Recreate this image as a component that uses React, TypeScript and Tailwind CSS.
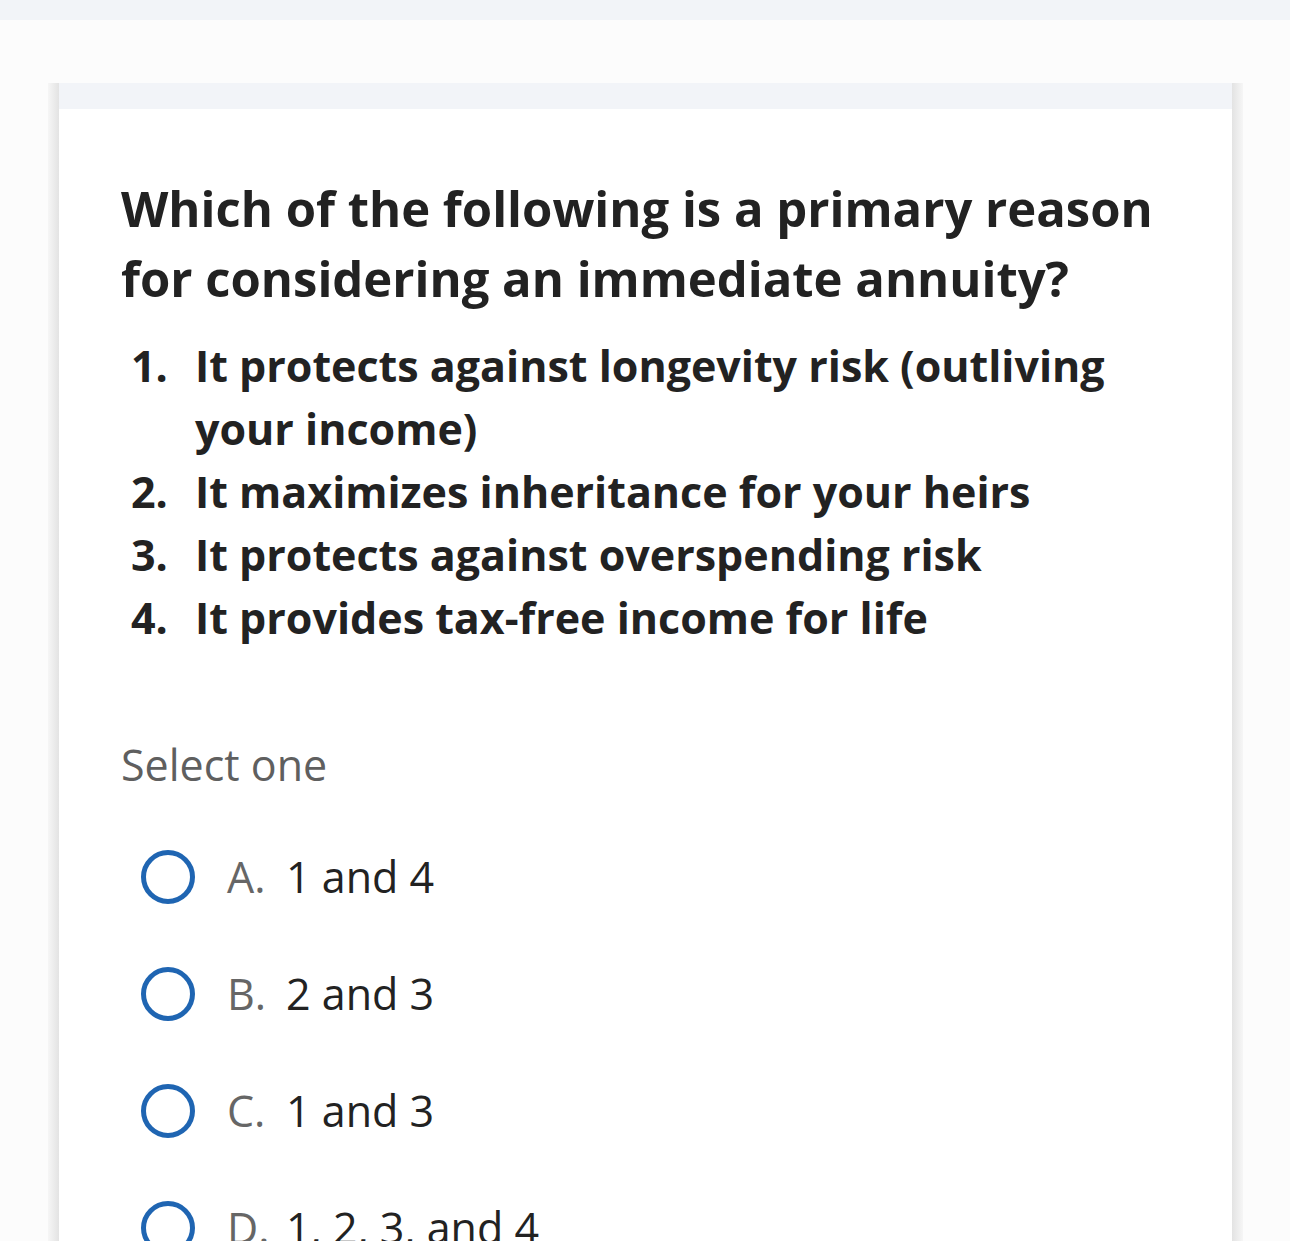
import React from "react";

const items = [
  "It protects against longevity risk (outliving your income)",
  "It maximizes inheritance for your heirs",
  "It protects against overspending risk",
  "It provides tax-free income for life",
];

const options = [
  ["A.", "1 and 4"],
  ["B.", "2 and 3"],
  ["C.", "1 and 3"],
  ["D.", "1, 2, 3, and 4"],
];

export default function App() {
  return (
    <div
      className="min-h-[1241px] bg-[#fcfcfc] overflow-hidden"
      style={{ fontFamily: '"Open Sans", "Noto Sans", sans-serif' }}
    >
      <div className="h-[20px] bg-[#f2f4f8]" />
      <div className="mt-[63px] ml-[48px] w-[1195px] flex">
        <div className="w-[11px] bg-gradient-to-r from-[#f6f6f6] to-[#e3e3e3]" />
        <div className="flex-1 bg-white">
          <div className="h-[26px] bg-[#f2f4f8]" />
          <div className="pl-[62px] pr-[40px] pt-[64px] pb-[40px]">
            <h1 className="text-[49px] leading-[70px] font-bold text-[#222]">
              Which of the following is a primary reason for considering an immediate annuity?
            </h1>
            <ol className="mt-[21px]">
              {items.map((t, i) => (
                <li key={i} className="flex text-[43px] leading-[63px] font-bold text-[#222]">
                  <span className="w-[74px] shrink-0 pl-[10px]">{i + 1}.</span>
                  <span className="pr-[80px]">{t}</span>
                </li>
              ))}
            </ol>
            <div className="mt-[84px] text-[43px] leading-[63px] text-[#5f5f5f]">Select one</div>
            <div className="mt-[22px]">
              {options.map(([l, t]) => (
                <div key={l} className="h-[117px] flex items-center">
                  <div className="ml-[20px] w-[54px] h-[54px] rounded-full border-[5px] border-[#1f65b2] shrink-0" />
                  <span className="ml-[32px] w-[59px] text-[43px] leading-[63px] text-[#666]">{l}</span>
                  <span className="text-[43px] leading-[63px] text-[#222]">{t}</span>
                </div>
              ))}
            </div>
          </div>
        </div>
        <div className="w-[11px] bg-gradient-to-r from-[#e3e3e3] to-[#f6f6f6]" />
      </div>
    </div>
  );
}
